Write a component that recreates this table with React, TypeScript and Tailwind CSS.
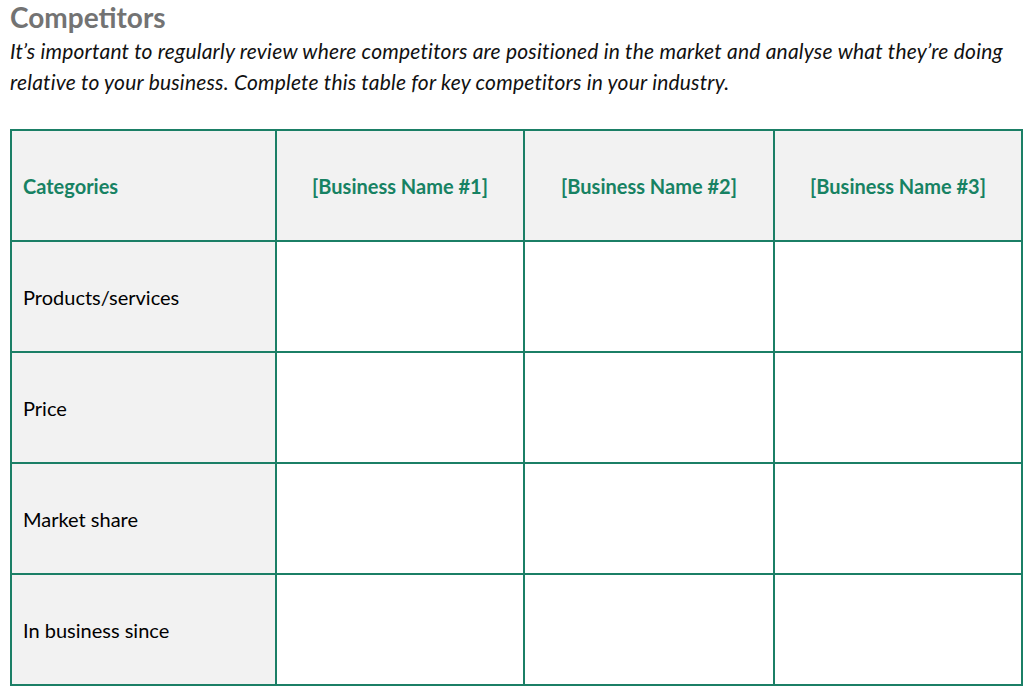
import React from 'react';

const businesses = ['[Business Name #1]', '[Business Name #2]', '[Business Name #3]'];
const categories = ['Products/services', 'Price', 'Market share', 'In business since'];

export default function App() {
  return (
    <div className="w-[1035px] h-[698px] bg-white px-[10px] pt-0 font-['Lato','Open_Sans',sans-serif] text-black">
      <h1 className="text-[28px] font-bold text-[#737373] leading-[34px]">Competitors</h1>
      {/* Intro */}
      <p className="italic text-[21px] tracking-[0.2px] leading-[31px] text-[#111] mt-[1px] whitespace-nowrap">
        It’s important to regularly review where competitors are positioned in the market and analyse what they’re doing
        <br />
        relative to your business. Complete this table for key competitors in your industry.
      </p>

      <table className="mt-[32px] w-[1011px] table-fixed border-collapse">
        <colgroup>
          <col className="w-[265px]" />
          <col className="w-[248px]" />
          <col className="w-[250px]" />
          <col className="w-[248px]" />
        </colgroup>
        <thead>
          <tr className="h-[111px] bg-[#f2f2f2]">
            <th className="border-2 border-[#1b7f66] text-left pl-[11px] text-[20px] font-bold text-[#178263]">
              Categories
            </th>
            {businesses.map((b) => (
              <th key={b} className="border-2 border-[#1b7f66] text-center text-[20px] font-bold text-[#178263]">
                {b}
              </th>
            ))}
          </tr>
        </thead>
        <tbody>
          {categories.map((c) => (
            <tr key={c} className="h-[111px]">
              <td className="border-2 border-[#1b7f66] bg-[#f2f2f2] pl-[11px] text-[20px]">{c}</td>
              <td className="border-2 border-[#1b7f66]" />
              <td className="border-2 border-[#1b7f66]" />
              <td className="border-2 border-[#1b7f66]" />
            </tr>
          ))}
        </tbody>
      </table>
    </div>
  );
}
